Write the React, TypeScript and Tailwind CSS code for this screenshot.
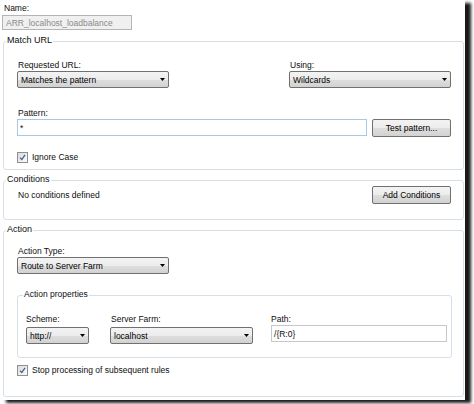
import type { ReactNode } from 'react';

function Select({ value, className }: { value: string; className: string }) {
  return (
    <div
      className={`flex h-[17px] items-center justify-between rounded-[2px] border border-[#707070] bg-[linear-gradient(#f3f3f3,#ececec_50%,#dedede_51%,#d2d2d2)] pl-[3px] pr-[3px] text-black ${className}`}
    >
      <span>{value}</span>
      <svg width="5" height="3" viewBox="0 0 5 3">
        <path d="M0 0h5L2.5 3z" fill="#000" />
      </svg>
    </div>
  );
}

function Button({ children }: { children: ReactNode }) {
  return (
    <button className="flex h-[18px] w-[79px] items-center justify-center rounded-[2px] border border-[#707070] bg-[linear-gradient(#f3f3f3,#ececec_50%,#dedede_51%,#d2d2d2)] text-black">
      {children}
    </button>
  );
}

function Check({ label }: { label: string }) {
  return (
    <div className="flex h-[12px] items-center gap-[4px]">
      <div className="flex h-[11px] w-[11px] items-center justify-center border border-[#8f8f8f] bg-[linear-gradient(135deg,#dcdcdc,#fbfbfb)]">
        <svg width="7" height="7" viewBox="0 0 7 7">
          <path d="M1 3.6 2.8 5.5 6 0.8" fill="none" stroke="#4a5f8e" strokeWidth="1.3" />
        </svg>
      </div>
      <span>{label}</span>
    </div>
  );
}

function Group({ title, className, children }: { title: string; className: string; children: ReactNode }) {
  return (
    <div className={`rounded-[3px] border border-[#d5dfe5] ${className}`}>
      <div className="-mt-[8px] -ml-[11px] w-fit bg-white px-[1px] text-[9px] leading-[12px]">{title}</div>
      {children}
    </div>
  );
}

export default function App() {
  return (
    <div className="h-[404px] w-[474px] bg-white font-['Liberation_Sans',Arial,sans-serif] text-[8.5px] leading-[12px] text-[#0e0e0e]">
      <div className="h-[400px] w-[465px] bg-white pl-[3px] pr-[1px] pt-[2px] shadow-[6px_3px_3px_rgba(0,0,0,0.9)]">
        {/* Name */}
        <div className="ml-[1px]">Name:</div>
        <div className="-ml-[1px] mt-[1px] flex h-[15px] w-[130px] items-center border border-[#b5b5b5] bg-[#f0f0f0] pl-[3px] text-[#8a8a8a]">
          ARR_localhost_loadbalance
        </div>

        {/* Match URL */}
        <Group title="Match URL" className="mt-[11px] pl-[13px] pr-[12px] pb-[6px]">
          <div className="mt-[13px] flex justify-between">
            <div className="w-[152px]">
              <div className="ml-[1px]">Requested URL:</div>
              <Select value="Matches the pattern" className="w-[152px]" />
            </div>
            <div className="w-[162px]">
              <div className="ml-[1px]">Using:</div>
              <Select value="Wildcards" className="w-[162px]" />
            </div>
          </div>
          <div className="ml-[1px] mt-[19px]">Pattern:</div>
          <div className="flex items-start justify-between">
            <div className="flex h-[17px] w-[350px] items-center border border-[#a9c8e4] pl-[2px]">*</div>
            <Button>Test pattern...</Button>
          </div>
          <div className="mt-[14px]">
            <Check label="Ignore Case" />
          </div>
        </Group>

        {/* Conditions */}
        <Group title="Conditions" className="mt-[10px] pl-[13px] pr-[12px] pb-[15px]">
          <div className="mt-[1px] flex h-[18px] items-center justify-between">
            <span className="ml-[1px]">No conditions defined</span>
            <Button>Add Conditions</Button>
          </div>
        </Group>

        {/* Action */}
        <Group title="Action" className="mt-[10px] pl-[13px] pr-[11px] pb-[20px]">
          <div className="ml-[1px] mt-[10px]">Action Type:</div>
          <Select value="Route to Server Farm" className="w-[152px]" />

          <div className="mt-[21px] rounded-[3px] border border-[#d5dfe5] pb-[13px] pl-[8px] pr-[4px]">
            <div className="-mt-[8px] -ml-[3px] w-fit bg-white px-[1px] leading-[12px]">Action properties</div>
            <div className="mt-[13px] flex items-start">
              <div className="w-[63px]">
                <div>Scheme:</div>
                <Select value="http://" className="mt-[2px] w-[63px]" />
              </div>
              <div className="ml-[21px] w-[143px]">
                <div className="ml-[1px]">Server Farm:</div>
                <Select value="localhost" className="mt-[2px] w-[143px]" />
              </div>
              <div className="ml-[18px] w-[176px]">
                <div>Path:</div>
                <div className="flex h-[17px] items-center border border-[#c5c9cf] pl-[2px]">/{'{'}R:0{'}'}</div>
              </div>
            </div>
          </div>

          <div className="mt-[6px]">
            <Check label="Stop processing of subsequent rules" />
          </div>
        </Group>
      </div>
    </div>
  );
}
